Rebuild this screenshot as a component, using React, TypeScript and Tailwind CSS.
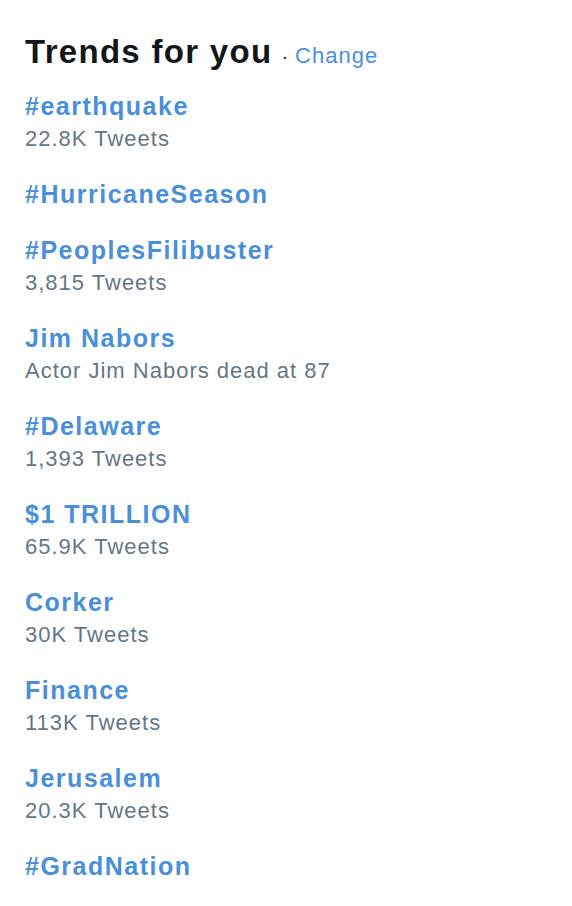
const trends: { name: string; meta?: string }[] = [
  { name: '#earthquake', meta: '22.8K Tweets' },
  { name: '#HurricaneSeason' },
  { name: '#PeoplesFilibuster', meta: '3,815 Tweets' },
  { name: 'Jim Nabors', meta: 'Actor Jim Nabors dead at 87' },
  { name: '#Delaware', meta: '1,393 Tweets' },
  { name: '$1 TRILLION', meta: '65.9K Tweets' },
  { name: 'Corker', meta: '30K Tweets' },
  { name: 'Finance', meta: '113K Tweets' },
  { name: 'Jerusalem', meta: '20.3K Tweets' },
  { name: '#GradNation' },
];

export default function App() {
  return (
    <div className="min-h-[906px] w-[572px] bg-white px-[25px] pt-[32px] font-['Liberation_Sans',Arial,sans-serif]">
      {/* Header */}
      <div className="flex items-baseline">
        <h2 className="text-[33px] leading-[40px] font-bold text-[#14171a] tracking-[1.3px]">Trends for you</h2>
        <span className="ml-[9px] text-[20px] text-[#14171a]">·</span>
        <a className="ml-[7px] text-[22px] text-[#4a90d9] tracking-[1px]">Change</a>
      </div>

      {/* Trend list */}
      <ul className="mt-[17px] flex flex-col">
        {trends.map((t) => (
          <li key={t.name} className="pb-[22px]">
            <div className="text-[25px] leading-[34px] font-bold text-[#4a90d9] tracking-[1.5px]">{t.name}</div>
            {t.meta && (
              <div className="text-[22px] leading-[32px] text-[#657786] tracking-[1px]">{t.meta}</div>
            )}
          </li>
        ))}
      </ul>
    </div>
  );
}
